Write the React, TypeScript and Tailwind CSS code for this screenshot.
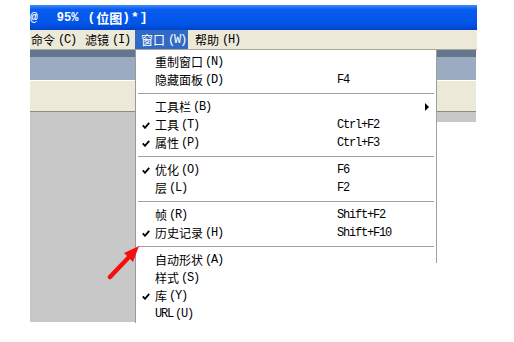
import { Fragment } from 'react';

type Item = { label: string; key: string; shortcut?: string; checked?: boolean; submenu?: boolean };
type Entry = Item | 'sep';

const cjk = { fontFamily: '"Noto Sans CJK SC", "Liberation Sans", sans-serif' };
const mono = { fontFamily: '"Liberation Mono", "Noto Sans CJK SC", monospace' };

const entries: Entry[] = [
  { label: '重制窗口', key: '(N)' },
  { label: '隐藏面板', key: '(D)', shortcut: 'F4' },
  'sep',
  { label: '工具栏', key: '(B)', submenu: true },
  { label: '工具', key: '(T)', shortcut: 'Ctrl+F2', checked: true },
  { label: '属性', key: '(P)', shortcut: 'Ctrl+F3', checked: true },
  'sep',
  { label: '优化', key: '(O)', shortcut: 'F6', checked: true },
  { label: '层', key: '(L)', shortcut: 'F2' },
  'sep',
  { label: '帧', key: '(R)', shortcut: 'Shift+F2' },
  { label: '历史记录', key: '(H)', shortcut: 'Shift+F10', checked: true },
  'sep',
  { label: '自动形状', key: '(A)' },
  { label: '样式', key: '(S)' },
  { label: '库', key: '(Y)', checked: true },
  { label: 'URL', key: '(U)' },
];

// widths taken so each label lands where the toolbar has it
const menus = [
  { label: '命令', key: '(C)', cls: 'w-[54px]' },
  { label: '滤镜', key: '(I)', cls: 'w-[50px]' },
  { label: '窗口', key: '(W)', cls: 'w-[53px] pl-[6px] bg-[#316ac5] text-white' },
  { label: '帮助', key: '(H)', cls: 'w-[60px] pl-[7px]' },
];

function Check() {
  return (
    <svg width="8" height="7" viewBox="0 0 8 7" className="shrink-0">
      <path d="M0.8 3.4 L3 5.8 L7.2 0.8" fill="none" stroke="#000" strokeWidth="1.8" />
    </svg>
  );
}

function SideStrip({ grayHeight }: { grayHeight: string }) {
  return (
    <div className="flex flex-col">
      <div className="h-[7px] bg-[#64768c]" />
      <div className="h-[24px] bg-[#9aabc2] border-b border-white" />
      <div className="h-[31px] bg-[#ece9d8] border-b border-[#8a8a8a]" />
      <div className={`${grayHeight} bg-[#c8c8c8]`} />
    </div>
  );
}

export default function App() {
  return (
    <div className="relative w-[514px] h-[342px] bg-white overflow-hidden pt-[5px] pl-[30px]">
      <div className="w-[447px] flex flex-col">
        <div className="h-[25px] bg-[linear-gradient(to_bottom,#3d8ef6_0%,#0a5cf0_18%,#0056e8_75%,#0042c8_100%)] flex items-center text-white font-bold text-[13px]" style={cjk}>
          <span style={mono} className="font-bold">@</span>
          <span style={mono} className="ml-[19px] font-bold text-[12px]">95%</span>
          <span style={mono} className="ml-[9px] font-bold">(</span>
          <span className="ml-[1px]">位图</span>
          <span style={mono} className="font-bold tracking-[1px]">)*]</span>
        </div>
        <div className="h-[20px] bg-[#ece9d8] border-b border-[#a8a8a0] flex items-stretch text-[12px] text-black pl-[1px]">
          {menus.map((m) => (
            <div key={m.label} className={`flex items-center shrink-0 whitespace-nowrap ${m.cls}`}>
              <span style={cjk} className="shrink-0">{m.label}</span>
              <span style={mono} className="shrink-0 ml-[3px] text-[12px] tracking-[-1.2px]">{m.key}</span>
            </div>
          ))}
        </div>
        <div className="flex items-start">
          <div className="w-[105px]">
            <SideStrip grayHeight="h-[210px]" />
          </div>
          <div className="w-[302px] bg-white border-l border-[#9a9a9a] pt-[3px] text-[12px] text-black">
            {entries.map((e, i) =>
              e === 'sep' ? (
                <div key={i} className="h-[9px] flex items-center pl-[2px] pr-[3px]">
                  <div className="h-px w-full bg-[#a0a0a0]" />
                </div>
              ) : (
                <Fragment key={i}>
                  <div className="h-[18px] flex items-center relative">
                    <div className="w-[19px] flex justify-end pr-[5px]">{e.checked && <Check />}</div>
                    {e.label === 'URL' ? (
                      <span style={mono} className="text-[12px] tracking-[-1.2px] leading-none">URL</span>
                    ) : (
                      <span style={cjk} className="leading-none">{e.label}</span>
                    )}
                    <span style={mono} className="ml-[2px] text-[12px] tracking-[-1.2px] leading-none">{e.key}</span>
                    {e.shortcut && (
                      <span style={mono} className="absolute left-[201px] text-[12px] tracking-[-1.2px] leading-none">{e.shortcut}</span>
                    )}
                    {e.submenu && (
                      <span className="absolute left-[289px] w-0 h-0 border-y-[4px] border-y-transparent border-l-[4px] border-l-black" />
                    )}
                  </div>
                </Fragment>
              ),
            )}
          </div>
          <div className="w-[40px] border-l border-[#a0a0a0] h-[213px] -ml-px">
            <SideStrip grayHeight="h-[10px]" />
          </div>
        </div>
      </div>
      <svg className="absolute left-[104px] top-[242px]" width="40" height="40" viewBox="0 0 40 40">
        <line x1="6" y1="35" x2="26" y2="14" stroke="#f51010" strokeWidth="4.5" strokeLinecap="round" />
        <polygon points="35,4 20,11 29,20" fill="#f51010" />
      </svg>
    </div>
  );
}
